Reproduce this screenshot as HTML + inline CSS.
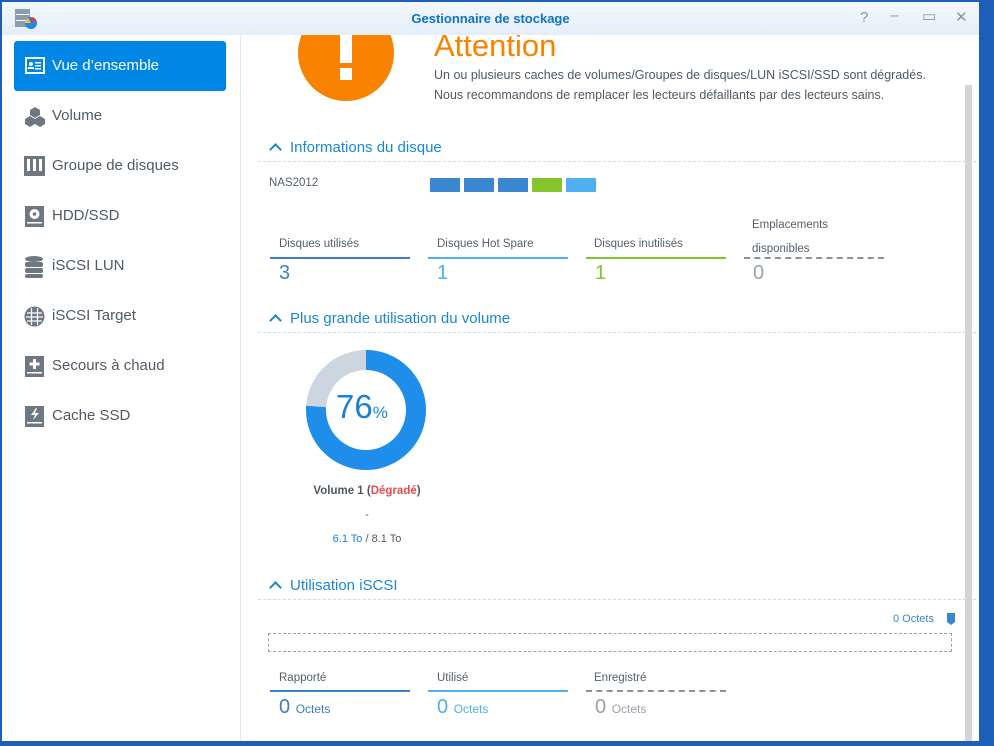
<!DOCTYPE html>
<html><head><meta charset="utf-8"><style>
*{margin:0;padding:0;box-sizing:border-box}
body{width:994px;height:746px;overflow:hidden;background:#1d5fb8;font-family:"Liberation Sans",sans-serif;position:relative}
.win{position:absolute;left:2px;top:2px;width:977px;height:739px;background:#fff;overflow:hidden}
.title{position:absolute;left:0;top:0;width:977px;height:33px;background:linear-gradient(#f3f8fd,#e4eef9);z-index:2}
.title .t{position:absolute;left:0;width:977px;text-align:center;top:9px;font-size:13px;font-weight:bold;color:#0d73c7}
.ctl{position:absolute;top:7px;font-size:15px;color:#8b95a0}
.side{position:absolute;left:0;top:33px;width:239px;height:706px;background:#fff;border-right:1px solid #e3e6ea}
.item{position:absolute;left:12px;width:212px;height:50px;font-size:15px;color:#505a64;padding-left:38px;line-height:50px}
.item.sel{background:#0086e5;color:#fff;border-radius:3px}
.item svg{position:absolute;left:10px;top:15px}
.main{position:absolute;left:240px;top:33px;width:737px;height:706px}
.a{position:absolute}
.sec{position:absolute;left:48px;font-size:15px;color:#1a87d6}
.sec:before{content:"";position:absolute;left:-19px;top:6px;width:7px;height:7px;border-left:2px solid #1a87d6;border-top:2px solid #1a87d6;transform:rotate(45deg)}
.hr{position:absolute;left:16px;width:718px;border-top:1px dashed #d0dbe6}
.lab{position:absolute;font-size:11.5px;color:#545f6a}
.bar{position:absolute;height:2px}
.num{position:absolute;font-size:20px}
</style></head><body>
<div class="win">
<div class="title"><div class="t">Gestionnaire de stockage</div>
<svg style="position:absolute;left:12px;top:6px" width="24" height="22"><rect x="1" y="1" width="15" height="18" fill="#8a9cb0"/><rect x="2" y="6" width="13" height="1" fill="#fff"/><rect x="2" y="12" width="13" height="1" fill="#fff"/><circle cx="17" cy="15" r="6" fill="#1e88e5"/><path d="M17 15 L17 9 A6 6 0 0 1 22 12Z" fill="#e53935"/><path d="M17 15 L11 15 A6 6 0 0 1 14 10Z" fill="#fbc02d"/></svg>
<span class="ctl" style="left:858px">?</span><span class="ctl" style="left:888px;top:5px">–</span><span class="ctl" style="left:920px;top:5px">▭</span><span class="ctl" style="left:953px;top:6px">✕</span>
</div>
<div class="side">
<div class="item sel" style="top:6px"><svg width="22" height="20"><rect x="1" y="1" width="20" height="17" fill="#fff"/><rect x="3" y="3" width="16" height="13" fill="#0086e5"/><circle cx="7" cy="8" r="2" fill="#fff"/><rect x="4" y="11" width="6" height="2" fill="#fff"/><rect x="11" y="6" width="6" height="1.5" fill="#fff"/><rect x="11" y="9" width="6" height="1.5" fill="#fff"/><rect x="11" y="12" width="6" height="1.5" fill="#fff"/></svg>Vue d’ensemble</div>
<div class="item" style="top:56px"><svg width="22" height="22"><path d="M11 1l5 3v5l-5 3-5-3V4z M6 10l5 3v5l-5 3-5-3v-5z M16 10l5 3v5l-5 3-5-3v-5z" fill="#6e7882"/></svg>Volume</div>
<div class="item" style="top:106px"><svg width="22" height="20"><rect x="0" y="0" width="21" height="20" fill="#6e7882"/><rect x="3" y="3" width="3" height="12" fill="#fff"/><rect x="9" y="3" width="3" height="12" fill="#fff"/><rect x="15" y="3" width="3" height="12" fill="#fff"/></svg>Groupe de disques</div>
<div class="item" style="top:156px"><svg width="22" height="22"><rect x="1" y="0" width="19" height="21" fill="#6e7882"/><circle cx="10.5" cy="8" r="5" fill="#fff"/><circle cx="10.5" cy="8" r="1.8" fill="#6e7882"/><rect x="3" y="16" width="15" height="1.5" fill="#fff"/></svg>HDD/SSD</div>
<div class="item" style="top:206px"><svg width="22" height="22"><ellipse cx="10" cy="3" rx="9" ry="3" fill="#6e7882"/><rect x="1" y="6" width="18" height="5" rx="2" fill="#6e7882"/><rect x="1" y="12" width="18" height="5" rx="2" fill="#6e7882"/><rect x="1" y="18" width="18" height="4" rx="2" fill="#6e7882"/></svg>iSCSI LUN</div>
<div class="item" style="top:256px"><svg width="22" height="22"><circle cx="10.5" cy="10.5" r="10" fill="#6e7882"/><path d="M3 7h15M2 11h17M3 15h15M7.5 2v17M13.5 2v17" stroke="#fff" stroke-width="1.2"/></svg>iSCSI Target</div>
<div class="item" style="top:306px"><svg width="22" height="22"><rect x="1" y="0" width="19" height="21" fill="#6e7882"/><path d="M10.5 3v10M5.5 8h10" stroke="#fff" stroke-width="3"/><rect x="3" y="16" width="15" height="1.5" fill="#fff"/></svg>Secours à chaud</div>
<div class="item" style="top:356px"><svg width="22" height="22"><rect x="1" y="0" width="19" height="21" fill="#6e7882"/><path d="M12 2L7 9h4l-2 5 6-7h-4l2-5z" fill="#fff"/><rect x="3" y="16" width="15" height="1.5" fill="#fff"/></svg>Cache SSD</div>
</div>
<div class="main">
<div class="a" style="left:56px;top:-30px;width:96px;height:96px;border-radius:50%;background:#f98300"></div>
<div class="a" style="left:98px;top:0;width:12px;height:28px;background:#fff"></div>
<div class="a" style="left:98px;top:33px;width:12px;height:12px;background:#fff"></div>
<div class="a" style="left:192px;top:-7px;font-size:31px;color:#f98300">Attention</div>
<div class="a" style="left:192px;top:30px;font-size:12.5px;color:#4e5964;line-height:20px">Un ou plusieurs caches de volumes/Groupes de disques/LUN iSCSI/SSD sont dégradés.<br>Nous recommandons de remplacer les lecteurs défaillants par des lecteurs sains.</div>
<div class="a" style="left:723px;top:50px;width:7px;height:656px;background:#d5d5d5"></div>
<div class="sec" style="top:104px">Informations du disque</div>
<div class="hr" style="top:126px"></div>
<div class="lab" style="left:27px;top:142px">NAS2012</div>
<div class="a" style="left:188px;top:143px;width:30px;height:14px;background:#3a86cf"></div>
<div class="a" style="left:222px;top:143px;width:30px;height:14px;background:#3a86cf"></div>
<div class="a" style="left:256px;top:143px;width:30px;height:14px;background:#3a86cf"></div>
<div class="a" style="left:290px;top:143px;width:30px;height:14px;background:#85c52b"></div>
<div class="a" style="left:324px;top:143px;width:30px;height:14px;background:#50aff0"></div>
<div class="lab" style="left:37px;top:203px">Disques utilisés</div>
<div class="lab" style="left:195px;top:203px">Disques Hot Spare</div>
<div class="lab" style="left:352px;top:203px">Disques inutilisés</div>
<div class="lab" style="left:510px;top:178px;line-height:24px">Emplacements<br>disponibles</div>
<div class="bar" style="left:28px;top:222px;width:140px;background:#3a7fc8"></div>
<div class="bar" style="left:186px;top:222px;width:140px;background:#50aff0"></div>
<div class="bar" style="left:344px;top:222px;width:140px;background:#85c52b"></div>
<div class="bar" style="left:502px;top:222px;width:140px;border-top:2px dashed #8a929a;height:0"></div>
<div class="num" style="left:37px;top:227px;color:#3a7fc8">3</div>
<div class="num" style="left:195px;top:227px;color:#50aff0">1</div>
<div class="num" style="left:353px;top:227px;color:#85c52b">1</div>
<div class="num" style="left:511px;top:227px;color:#9aa3ab">0</div>
<div class="sec" style="top:275px">Plus grande utilisation du volume</div>
<div class="hr" style="top:297px"></div>
<svg class="a" style="left:62px;top:313px" width="124" height="124"><circle cx="62" cy="62" r="50" fill="none" stroke="#cdd6e0" stroke-width="20"/><circle cx="62" cy="62" r="50" fill="none" stroke="#1f8eea" stroke-width="20" stroke-dasharray="238.8 400" transform="rotate(-90 62 62)"/></svg>
<div class="a" style="left:94px;top:353px;font-size:33px;color:#1a80d8">76<span style="font-size:17px">%</span></div>
<div class="a" style="left:0;width:250px;text-align:center;top:450px;font-size:11.5px;font-weight:bold;color:#4e5964">Volume 1 (<span style="color:#e84c4c">Dégradé</span>)</div>
<div class="a" style="left:0;width:250px;text-align:center;top:474px;font-size:11px;color:#4e5964">-</div>
<div class="a" style="left:0;width:250px;text-align:center;top:498px;font-size:11px;color:#4e5964"><span style="color:#1a80d8">6.1 To</span> / 8.1 To</div>
<div class="sec" style="top:542px">Utilisation iSCSI</div>
<div class="hr" style="top:564px"></div>
<div class="a" style="left:651px;top:578px;font-size:11px;color:#3a86cf">0 Octets</div>
<div class="a" style="left:705px;top:578px;width:8px;height:12px;background:#3a86cf;clip-path:polygon(0 0,100% 0,100% 75%,50% 100%,0 75%)"></div>
<div class="a" style="left:26px;top:598px;width:684px;height:19px;border:1px dashed #9aa3ab"></div>
<div class="lab" style="left:37px;top:637px">Rapporté</div>
<div class="lab" style="left:195px;top:637px">Utilisé</div>
<div class="lab" style="left:352px;top:637px">Enregistré</div>
<div class="bar" style="left:28px;top:655px;width:140px;background:#3a7fc8"></div>
<div class="bar" style="left:186px;top:655px;width:140px;background:#50aff0"></div>
<div class="bar" style="left:344px;top:655px;width:140px;border-top:2px dashed #8a929a;height:0"></div>
<div class="num" style="left:37px;top:661px;color:#3a7fc8">0 <span style="font-size:12px">Octets</span></div>
<div class="num" style="left:195px;top:661px;color:#50aff0">0 <span style="font-size:12px">Octets</span></div>
<div class="num" style="left:353px;top:661px;color:#9aa3ab">0 <span style="font-size:12px">Octets</span></div>
</div>
</div>
</body></html>
